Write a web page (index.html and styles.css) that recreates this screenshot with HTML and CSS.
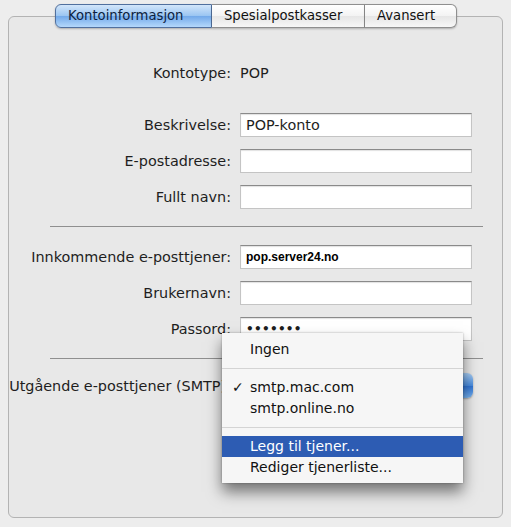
FILE: index.html
```html
<!DOCTYPE html>
<html lang="no">
<head>
    <meta charset="UTF-8">
    <title>Kontoinformasjon</title>
    <link rel="stylesheet" href="styles.css">
</head>
<body>
    <div class="window">
        <div class="panel">
            <div class="tabs">
                <div class="tab selected">Kontoinformasjon</div>
                <div class="tab">Spesialpostkasser</div>
                <div class="tab">Avansert</div>
            </div>

            <div class="form type-row">
                <span class="label">Kontotype:</span>
                <span class="value">POP</span>
            </div>

            <div class="form fields">
                <label class="label">Beskrivelse:</label>
                <div class="field">POP-konto</div>
                <label class="label">E-postadresse:</label>
                <div class="field"></div>
                <label class="label">Fullt navn:</label>
                <div class="field"></div>
            </div>

            <div class="separator"></div>

            <div class="form fields">
                <label class="label">Innkommende e-posttjener:</label>
                <div class="field server">pop.server24.no</div>
                <label class="label">Brukernavn:</label>
                <div class="field"></div>
                <label class="label">Passord:</label>
                <div class="field dots">&bull;&bull;&bull;&bull;&bull;&bull;&bull;</div>
            </div>

            <div class="separator"></div>

            <div class="form smtp-row">
                <label class="label">Utgående e-posttjener (SMTP):</label>
                <div class="popup"></div>
            </div>
        </div>

        <div class="menu">
            <div class="item">Ingen</div>
            <div class="menu-sep"></div>
            <div class="item checked">smtp.mac.com</div>
            <div class="item">smtp.online.no</div>
            <div class="menu-sep"></div>
            <div class="item active">Legg til tjener...</div>
            <div class="item">Rediger tjenerliste...</div>
        </div>
    </div>
</body>
</html>
```

FILE: styles.css
```css
body {
    margin: 0;
    background-color: #ededed;
    font-family: "DejaVu Sans", sans-serif;
    font-size: 14.4px;
    color: #1e1e1e;
}
.window {
    position: relative;
    padding: 16px 8px 9px;
}
.panel {
    height: 500px;
    border: 1px solid #b3b3b3;
    border-radius: 6px;
    background-color: #e8e8e8;
}
.tabs {
    display: flex;
    justify-content: center;
    margin-top: -13px;
    margin-left: 1px;
    font-size: 13.2px;
}
.tab {
    height: 22px;
    line-height: 22px;
    padding: 0 12px;
    border: 1px solid #8f8f8f;
    border-left: none;
    background: linear-gradient(#ffffff, #f3f3f3 50%, #e6e6e6 51%, #f7f7f7);
    color: #111;
    box-shadow: 0 1px 2px rgba(0, 0, 0, 0.25);
}
.tab:first-child {
    border-left: 1px solid #5b7396;
    border-radius: 6px 0 0 6px;
}
.tab:last-child {
    border-radius: 0 6px 6px 0;
}
.tab.selected {
    width: 131px;
    border-color: #51709e;
    background: linear-gradient(#d3e6fa, #9cc6f2 48%, #74aaea 52%, #b4d8fb);
    color: #0d1f3f;
}
.tab:nth-child(2) {
    width: 128px;
}
.tab:nth-child(3) {
    width: 67px;
}
.form {
    display: grid;
    grid-template-columns: 222px 232px;
    column-gap: 9px;
    align-items: center;
}
.label {
    justify-self: end;
    white-space: nowrap;
}
.type-row {
    margin-top: 35px;
    height: 20px;
}
.fields {
    margin-top: 30px;
    row-gap: 12px;
}
.separator + .fields {
    margin-top: 18px;
}
.field {
    height: 22px;
    line-height: 22px;
    padding: 0 5px;
    border: 1px solid #c4c4c4;
    border-top-color: #8a8a8a;
    background-color: #fff;
    box-shadow: inset 0 1px 1px rgba(0, 0, 0, 0.12);
}
.server {
    font-family: "Liberation Sans", sans-serif;
    font-size: 12px;
    font-weight: bold;
    color: #000;
}
.dots {
    font-size: 12px;
    font-weight: bold;
    letter-spacing: 0.3px;
}
.separator {
    height: 1px;
    margin: 17px 19px 0 41px;
    background-color: #8f8f8f;
}
.smtp-row {
    margin-top: 14px;
}
.popup {
    height: 25px;
    width: 233px;
    border-radius: 6px;
    background: linear-gradient(#a7cdf4, #4b8ee0 50%, #2d72d4 51%, #77b3f0);
    box-shadow: 0 1px 2px rgba(0, 0, 0, 0.3);
}
.menu {
    position: absolute;
    left: 222px;
    top: 333px;
    width: 241px;
    padding: 6px 0 5px;
    background-color: #f6f6f6;
    font-size: 14px;
    box-shadow: 0 9px 14px rgba(0, 0, 0, 0.5), 0 0 2px rgba(0, 0, 0, 0.3);
}
.item {
    height: 21px;
    line-height: 21px;
    padding-left: 28px;
    color: #111;
}
.item.checked {
    position: relative;
}
.item.checked::before {
    content: "\2713";
    position: absolute;
    left: 10px;
}
.item.active {
    background-color: #2d5cb3;
    color: #fff;
}
.menu-sep {
    height: 1px;
    margin: 8px 0;
    background-color: #d4d4d4;
}
```
